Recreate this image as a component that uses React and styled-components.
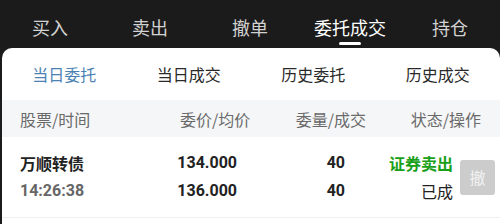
import styled, { createGlobalStyle } from "styled-components";

const GlobalStyle = createGlobalStyle`
  html, body {
    margin: 0;
    padding: 0;
    background: #1b1b1b;
    font-family: "Noto Sans CJK SC", "Noto Sans", Roboto, sans-serif;
  }
`;

const TOP_TABS = ["买入", "卖出", "撤单", "委托成交", "持仓"];
const SUB_TABS = ["当日委托", "当日成交", "历史委托", "历史成交"];

const App = () => {
  return (
    <Page>
      <GlobalStyle />
      <TopBar>
        {TOP_TABS.map((t) => (
          <TopTab key={t} $active={t === "委托成交"}>
            {t}
          </TopTab>
        ))}
      </TopBar>
      <Panel>
        <SubTabs>
          {SUB_TABS.map((t, i) => (
            <SubTab key={t} $active={i === 0}>
              {t}
            </SubTab>
          ))}
        </SubTabs>
        <HeaderRow>
          <HeadCell>股票/时间</HeadCell>
          <HeadCell $right>委价/均价</HeadCell>
          <HeadCell $right>委量/成交</HeadCell>
          <HeadCell $right>状态/操作</HeadCell>
        </HeaderRow>
        <OrderRow>
          <Col>
            <Name>万顺转债</Name>
            <Time>14:26:38</Time>
          </Col>
          <Col $right>
            <Num>134.000</Num>
            <Num>136.000</Num>
          </Col>
          <Col $right>
            <Num>40</Num>
            <Num>40</Num>
          </Col>
          <Col $right>
            <Side>证券卖出</Side>
            <Status>已成</Status>
          </Col>
          <CancelButton disabled>撤</CancelButton>
        </OrderRow>
      </Panel>
    </Page>
  );
};

export default App;

// Styling
const Page = styled.div`
  width: 500px;
  height: 224px;
  overflow: hidden;
  background: #1b1b1b;
`;

const TopBar = styled.div`
  display: grid;
  grid-template-columns: repeat(5, 1fr);
  height: 48px;
`;

const TopTab = styled.div`
  position: relative;
  display: flex;
  justify-content: center;
  padding-top: 14px;
  font-size: 18px;
  line-height: 26px;
  color: ${(p) => (p.$active ? "#ffffff" : "#d2d2d2")};

  &::after {
    content: "";
    display: ${(p) => (p.$active ? "block" : "none")};
    position: absolute;
    left: 50%;
    bottom: 3px;
    width: 22px;
    height: 3px;
    margin-left: -11px;
    border-radius: 2px;
    background: #ffffff;
  }
`;

const Panel = styled.div`
  margin-left: 2px;
  height: 176px;
  background: #ffffff;
  border-radius: 10px 10px 0 0;
`;

const SubTabs = styled.div`
  display: grid;
  grid-template-columns: repeat(4, 1fr);
  height: 52px;
  align-items: center;
`;

const SubTab = styled.div`
  text-align: center;
  font-size: 16px;
  color: ${(p) => (p.$active ? "#4b82b4" : "#2a2a2a")};
`;

const HeaderRow = styled.div`
  display: grid;
  grid-template-columns: 160px 70px 116px 115px;
  align-items: center;
  height: 37px;
  padding-left: 18px;
  background: #f5f6f8;
`;

const HeadCell = styled.div`
  font-size: 16px;
  white-space: nowrap;
  color: #6a6a6a;
  text-align: ${(p) => (p.$right ? "right" : "left")};
`;

const OrderRow = styled.div`
  display: grid;
  grid-template-columns: 150px 67px 108px 108px 35px;
  align-items: center;
  height: 80px;
  padding-left: 18px;
  border-bottom: 1px solid #efefef;

  & > button {
    margin-left: 7px;
  }
`;

const Col = styled.div`
  display: flex;
  flex-direction: column;
  gap: 4px;
  align-items: ${(p) => (p.$right ? "flex-end" : "flex-start")};
`;

const Name = styled.div`
  font-size: 16px;
  line-height: 24px;
  font-weight: bold;
  color: #222222;
`;

const Time = styled.div`
  font-size: 16px;
  line-height: 24px;
  font-weight: bold;
  color: #666666;
  font-family: Roboto, "Noto Sans", sans-serif;
`;

const Num = styled.div`
  font-size: 16px;
  line-height: 24px;
  font-weight: bold;
  color: #222222;
  font-family: Roboto, "Noto Sans", sans-serif;
`;

const Side = styled.div`
  font-size: 16px;
  line-height: 24px;
  font-weight: bold;
  color: #19a019;
`;

const Status = styled.div`
  font-size: 16px;
  line-height: 24px;
  color: #222222;
`;

const CancelButton = styled.button`
  width: 35px;
  height: 35px;
  padding: 0;
  border: none;
  border-radius: 3px;
  background: #cccccc;
  color: #f2f2f2;
  font-size: 16px;
  font-family: "Noto Sans CJK SC", sans-serif;
`;
